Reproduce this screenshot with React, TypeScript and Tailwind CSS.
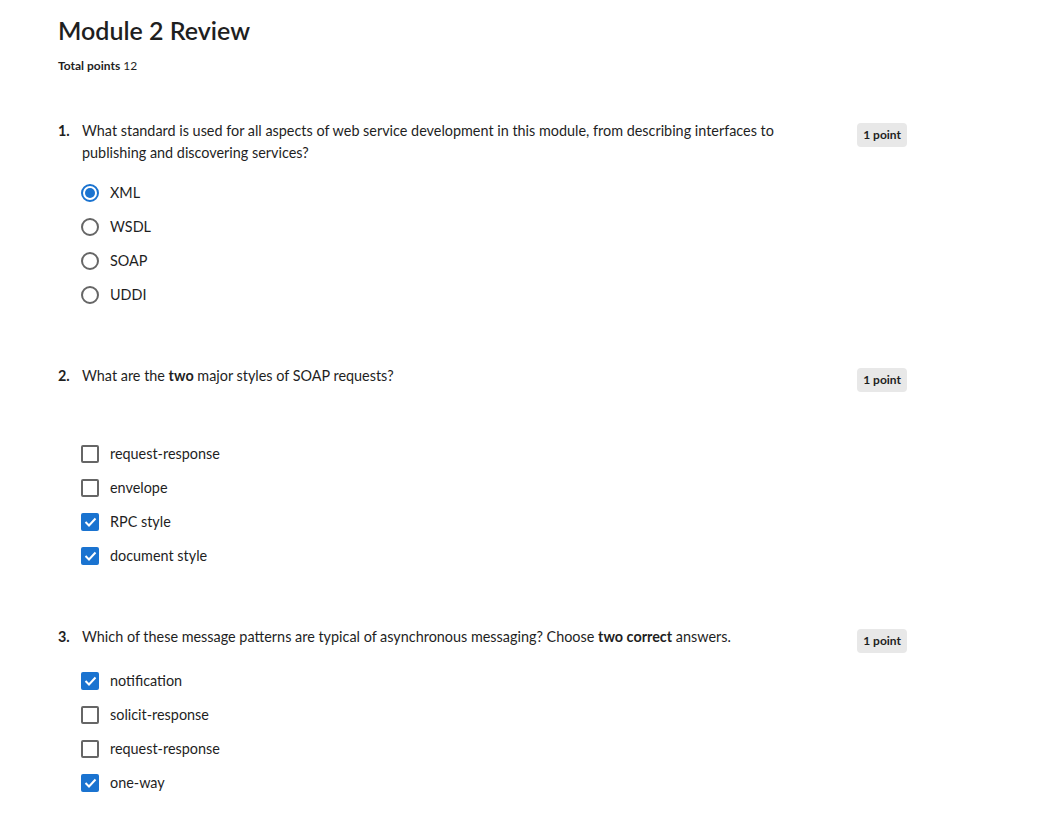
import React from 'react';

type Option = { label: string; checked: boolean };
type Question = {
  num: number;
  kind: 'radio' | 'checkbox';
  text: React.ReactNode;
  options: Option[];
  gapTop: string;
};

const questions: Question[] = [
  {
    num: 1,
    kind: 'radio',
    text: 'What standard is used for all aspects of web service development in this module, from describing interfaces to publishing and discovering services?',
    options: [
      { label: 'XML', checked: true },
      { label: 'WSDL', checked: false },
      { label: 'SOAP', checked: false },
      { label: 'UDDI', checked: false },
    ],
    gapTop: 'mt-[20px]',
  },
  {
    num: 2,
    kind: 'checkbox',
    text: (
      <>
        What are the <b className="font-bold">two</b> major styles of SOAP requests?
      </>
    ),
    options: [
      { label: 'request-response', checked: false },
      { label: 'envelope', checked: false },
      { label: 'RPC style', checked: true },
      { label: 'document style', checked: true },
    ],
    gapTop: 'mt-[58px]',
  },
  {
    num: 3,
    kind: 'checkbox',
    text: (
      <>
        Which of these message patterns are typical of asynchronous messaging? Choose{' '}
        <b className="font-bold">two correct</b> answers.
      </>
    ),
    options: [
      { label: 'notification', checked: true },
      { label: 'solicit-response', checked: false },
      { label: 'request-response', checked: false },
      { label: 'one-way', checked: true },
    ],
    gapTop: 'mt-[24px]',
  },
];

function Radio({ checked }: { checked: boolean }) {
  return checked ? (
    <span className="flex h-[18px] w-[18px] items-center justify-center rounded-full border-2 border-[#1a73d0]">
      <span className="h-[10px] w-[10px] rounded-full bg-[#1a73d0]" />
    </span>
  ) : (
    <span className="h-[18px] w-[18px] rounded-full border-2 border-[#666666]" />
  );
}

function Checkbox({ checked }: { checked: boolean }) {
  return checked ? (
    <span className="flex h-[18px] w-[18px] items-center justify-center rounded-[2px] bg-[#1a73d0]">
      <svg width="13" height="10" viewBox="0 0 13 10" fill="none">
        <path d="M1.5 5l3.5 3.5L11.5 1.5" stroke="white" strokeWidth="2" />
      </svg>
    </span>
  ) : (
    <span className="h-[18px] w-[18px] rounded-[2px] border-2 border-[#666666]" />
  );
}

export default function App() {
  return (
    <div
      className="min-h-screen bg-white pl-[58px] pt-[13px] text-[#1f1f1f]"
      style={{ fontFamily: 'Lato, "Open Sans", sans-serif' }}
    >
      <h1 className="text-[25px] font-semibold leading-[34px]">Module 2 Review</h1>
      <p className="mt-[11px] text-[12px] leading-[16px]">
        <b className="font-bold">Total points</b> 12
      </p>

      <div className="mt-[46px] w-[849px]">
        {questions.map((q, i) => (
          <div key={q.num} className={i === 0 ? '' : 'mt-[61px]'}>
            {/* question row */}
            <div className="flex items-start">
              <span className="w-[24px] shrink-0 text-[14.4px] font-bold leading-[22px]">{q.num}.</span>
              <p className="w-[700px] text-[14.4px] leading-[22px]">{q.text}</p>
              <div className="ml-auto h-[22px] pt-[3px]">
                <span className="block rounded-[4px] bg-[#e8e8e8] px-[6px] py-[4px] text-[12px] font-bold leading-[16px]">
                  1 point
                </span>
              </div>
            </div>

            {/* options */}
            <div className={`${q.gapTop} flex flex-col gap-[16px] pl-[23px]`}>
              {q.options.map((o) => (
                <label key={o.label} className="flex h-[18px] items-center gap-[11px] text-[14.4px]">
                  {q.kind === 'radio' ? <Radio checked={o.checked} /> : <Checkbox checked={o.checked} />}
                  <span>{o.label}</span>
                </label>
              ))}
            </div>
          </div>
        ))}
      </div>
    </div>
  );
}
